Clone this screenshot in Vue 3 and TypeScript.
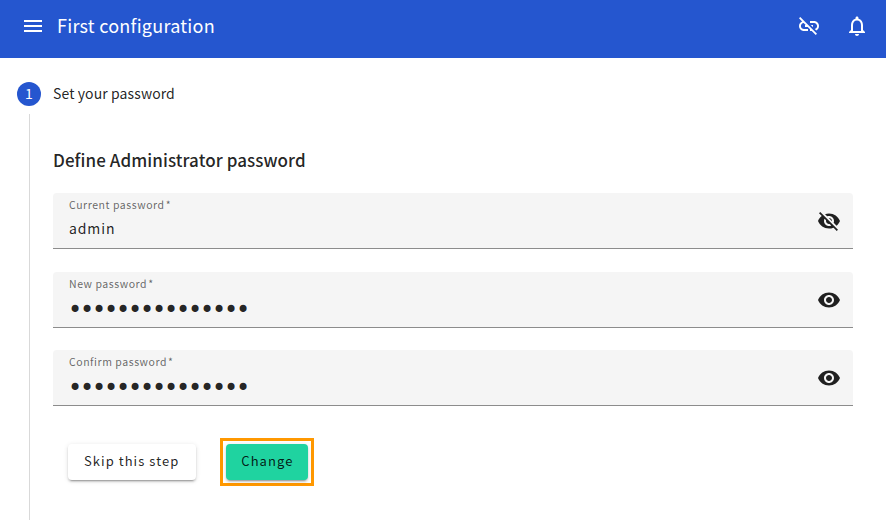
<script setup lang="ts">
import { ref } from 'vue';

type Field = { id: string; label: string; value: string; shown: boolean };

const fields = ref<Field[]>([
  { id: 'current', label: 'Current password', value: 'admin', shown: true },
  { id: 'new', label: 'New password', value: 'adminadminadmin', shown: false },
  { id: 'confirm', label: 'Confirm password', value: 'adminadminadmin', shown: false },
]);

const toggle = (field: Field) => {
  field.shown = !field.shown;
};
</script>

<template>
  <div class="page">
    <header class="toolbar">
      <button class="icon-btn menu" aria-label="Menu">
        <svg viewBox="0 0 24 24" width="24" height="24"><path d="M3 18h18v-2H3v2zm0-5h18v-2H3v2zm0-7v2h18V6H3z" /></svg>
      </button>
      <span class="title">First configuration</span>
      <span class="spacer"></span>
      <button class="icon-btn" aria-label="Connection">
        <svg viewBox="0 0 24 24" width="24" height="24"><path d="M17 7h-4v1.9h4c1.71 0 3.1 1.39 3.1 3.1 0 1.43-.98 2.63-2.31 2.98l1.46 1.46C20.88 15.61 22 13.95 22 12c0-2.76-2.24-5-5-5zm-1 4h-2.19l2 2H16zM2 4.27l3.11 3.11C3.29 8.12 2 9.91 2 12c0 2.76 2.24 5 5 5h4v-1.9H7c-1.71 0-3.1-1.39-3.1-3.1 0-1.59 1.21-2.9 2.76-3.07L8.73 11H8v2h2.73L13 15.27V17h1.73l4.01 4L20 19.74 3.27 3 2 4.27z" /></svg>
      </button>
      <button class="icon-btn" aria-label="Notifications">
        <svg viewBox="0 0 24 24" width="24" height="24"><path d="M12 22c1.1 0 2-.9 2-2h-4c0 1.1.9 2 2 2zm6-6v-5c0-3.07-1.63-5.64-4.5-6.32V4c0-.83-.67-1.5-1.5-1.5s-1.5.67-1.5 1.5v.68C7.64 5.36 6 7.92 6 11v5l-2 2v1h16v-1l-2-2zm-2 1H8v-6c0-2.48 1.51-4.5 4-4.5s4 2.02 4 4.5v6z" /></svg>
      </button>
    </header>

    <div class="step-head">
      <span class="step-num">1</span>
      <span class="step-label">Set your password</span>
    </div>

    <section class="step-body">
      <h2>Define Administrator password</h2>

      <div v-for="field in fields" :key="field.id" class="field">
        <div class="field-text">
          <label :for="field.id">{{ field.label }}<span class="req">*</span></label>
          <input
            :id="field.id"
            v-model="field.value"
            :class="{ dots: !field.shown }"
            :type="field.shown ? 'text' : 'password'"
          />
        </div>
        <button class="eye" aria-label="Toggle visibility" @click="toggle(field)">
          <svg v-if="field.shown" viewBox="0 0 24 24" width="24" height="24"><path d="M12 7c2.76 0 5 2.24 5 5 0 .65-.13 1.26-.36 1.83l2.92 2.92c1.51-1.26 2.7-2.89 3.43-4.75-1.73-4.39-6-7.5-11-7.5-1.4 0-2.74.25-3.98.7l2.16 2.16C10.74 7.13 11.35 7 12 7zM2 4.27l2.28 2.28.46.46C3.08 8.3 1.78 10.02 1 12c1.73 4.39 6 7.5 11 7.5 1.55 0 3.03-.3 4.38-.84l.42.42L19.73 22 21 20.73 3.27 3 2 4.27zM7.53 9.8l1.55 1.55c-.05.21-.08.43-.08.65 0 1.66 1.34 3 3 3 .22 0 .44-.03.65-.08l1.55 1.55c-.67.33-1.41.53-2.2.53-2.76 0-5-2.24-5-5 0-.79.2-1.53.53-2.2zm4.31-.78l3.15 3.15.02-.16c0-1.66-1.34-3-3-3l-.17.01z" /></svg>
          <svg v-else viewBox="0 0 24 24" width="24" height="24"><path d="M12 4.5C7 4.5 2.73 7.61 1 12c1.73 4.39 6 7.5 11 7.5s9.27-3.11 11-7.5c-1.73-4.39-6-7.5-11-7.5zM12 17c-2.76 0-5-2.24-5-5s2.24-5 5-5 5 2.24 5 5-2.24 5-5 5zm0-8c-1.66 0-3 1.34-3 3s1.34 3 3 3 3-1.34 3-3-1.34-3-3-3z" /></svg>
        </button>
      </div>

      <div class="actions">
        <button class="btn skip">Skip this step</button>
        <span class="highlight"><button class="btn change">Change</button></span>
      </div>
    </section>
  </div>
</template>

<style>
html,
body {
  margin: 0;
  background: #fff;
  overflow: hidden;
}
</style>

<style scoped>
.page {
  width: 886px;
  height: 520px;
  overflow: hidden;
  font-family: "Noto Sans CJK JP", "Noto Sans", sans-serif;
  color: rgba(0, 0, 0, 0.87);
}

.toolbar {
  display: flex;
  align-items: center;
  height: 58px;
  box-sizing: border-box;
  padding: 0 5px 6px 9px;
  background: #2556cf;
  color: #fff;
}

.icon-btn {
  width: 48px;
  height: 48px;
  display: flex;
  align-items: center;
  justify-content: center;
  padding: 0;
  border: 0;
  background: none;
  fill: #fff;
}

.title {
  margin-top: -2px;
  font-size: 18px;
  line-height: 32px;
  letter-spacing: 0.25px;
}

.spacer {
  flex: 1;
}

.step-head {
  display: flex;
  align-items: center;
  gap: 12px;
  height: 24px;
  margin: 24px 0 0 17px;
}

.step-num {
  width: 24px;
  height: 24px;
  border-radius: 50%;
  background: #2556cf;
  color: #fff;
  font-size: 14px;
  line-height: 22px;
  text-align: center;
}

.step-label {
  margin-top: -2px;
  font-size: 14px;
  line-height: 24px;
  letter-spacing: 0.1px;
}

.step-body {
  margin: 8px 0 0 29px;
  padding: 33px 33px 0 23px;
  height: 406px;
  border-left: 1px solid #d9d9d9;
  box-sizing: border-box;
}

h2 {
  margin: 0 0 20px;
  font-size: 17px;
  font-weight: 500;
  line-height: 26px;
  letter-spacing: 0.07px;
}

.field {
  display: flex;
  height: 56px;
  margin-bottom: 22.5px;
  box-sizing: border-box;
  padding: 0 12px 0 16px;
  border-radius: 4px 4px 0 0;
  border-bottom: 1px solid #8c8c8c;
  background: #f5f5f5;
}

.field-text {
  flex: 1;
  display: flex;
  flex-direction: column;
}

label {
  margin-top: 5px;
  font-size: 10.5px;
  line-height: 14px;
  letter-spacing: 0.55px;
  color: rgba(0, 0, 0, 0.6);
}

.req {
  margin-left: 1px;
}

input {
  width: 100%;
  height: 24px;
  margin-top: 4px;
  padding: 0;
  border: 0;
  outline: 0;
  background: none;
  font-family: inherit;
  font-size: 14px;
  letter-spacing: 0.9px;
  color: rgba(0, 0, 0, 0.87);
}

input.dots {
  margin-top: 7px;
  margin-left: -1px;
  font-family: "DejaVu Sans", sans-serif;
  font-size: 24px;
  letter-spacing: -2.15px;
}

.eye {
  display: flex;
  align-self: center;
  margin-top: 1px;
  padding: 0;
  border: 0;
  background: none;
  fill: rgba(0, 0, 0, 0.87);
}

.actions {
  display: flex;
  align-items: center;
  gap: 24px;
  margin: 32px 0 0 15px;
}

.highlight {
  display: flex;
  padding: 3px;
  border: 3px solid #ff9800;
}

.btn {
  height: 36px;
  padding: 0 17px 4px 16px;
  border: 0;
  border-radius: 4px;
  font-family: inherit;
  font-size: 13px;
  font-weight: 400;
  letter-spacing: 1.05px;
  color: rgba(0, 0, 0, 0.87);
  box-shadow: 0 3px 1px -2px rgba(0, 0, 0, 0.2), 0 2px 2px 0 rgba(0, 0, 0, 0.14), 0 1px 5px 0 rgba(0, 0, 0, 0.12);
}

.skip {
  background: #fff;
}

.change {
  padding: 0 15px 4px 15px;
  background: #1fd3a0;
}
</style>
